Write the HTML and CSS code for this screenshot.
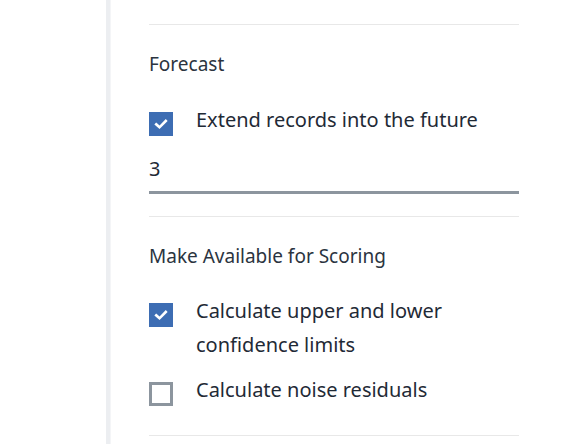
FILE: index.html
```html
<!DOCTYPE html>
<html>
<head>
<meta charset="utf-8">
<link rel="stylesheet" href="styles.css">
</head>
<body>
<div class="layout">
  <div class="side"></div>
  <div class="panel">
    <div class="content">
      <hr class="divider first">
      <section class="group group-forecast">
        <div class="group-title">Forecast</div>
        <label class="check">
          <span class="box checked"><svg viewBox="0 0 24 24" width="24" height="24"><path d="M7.2 12.3 L10.5 15.3 L16.8 8.9" fill="none" stroke="#fff" stroke-width="2.6" stroke-linecap="square"/></svg></span>
          <span class="check-label">Extend records into the future</span>
        </label>
        <div class="field">3</div>
      </section>
      <hr class="divider">
      <section class="group group-scoring">
        <div class="group-title">Make Available for Scoring</div>
        <div class="checks">
          <label class="check">
            <span class="box checked"><svg viewBox="0 0 24 24" width="24" height="24"><path d="M7.2 12.3 L10.5 15.3 L16.8 8.9" fill="none" stroke="#fff" stroke-width="2.6" stroke-linecap="square"/></svg></span>
            <span class="check-label">Calculate upper and lower confidence limits</span>
          </label>
          <label class="check">
            <span class="box"></span>
            <span class="check-label">Calculate noise residuals</span>
          </label>
        </div>
      </section>
      <hr class="divider">
    </div>
  </div>
</div>
</body>
</html>
```

FILE: styles.css
```css
html, body {
  margin: 0;
  padding: 0;
  background: #fff;
}
body {
  font-family: "Noto Sans", "Open Sans", sans-serif;
  color: #1f2a36;
  width: 561px;
  height: 444px;
  overflow: hidden;
}
.layout {
  display: flex;
  height: 444px;
}
.side {
  width: 106px;
  flex: none;
  background: #fff;
}
.panel {
  flex: 1;
  border-left: 4px solid #eceef1;
  box-shadow: inset 1px 0 0 #f4f5f7;
  padding-left: 39px;
}
.content {
  width: 370px;
}
.divider {
  border: 0;
  border-top: 1px solid #e8e8e8;
  margin: 0;
}
.divider.first {
  margin-top: 24px;
}
.group {
  padding-top: 25px;
}
.group-forecast {
  padding-bottom: 22px;
}
.group-forecast .group-title {
  margin-bottom: 25px;
}
.group-scoring {
  padding-bottom: 28px;
}
.group-scoring .group-title {
  margin-bottom: 24px;
}
.group-title {
  font-size: 19px;
  line-height: 28px;
  color: #2b3440;
}
.checks {
  display: flex;
  flex-direction: column;
  gap: 11px;
}
.check {
  display: flex;
  align-items: flex-start;
  gap: 23px;
}
.box {
  width: 24px;
  height: 24px;
  flex: none;
  box-sizing: border-box;
  border: 3px solid #8c959e;
  background: #fff;
  margin-top: 9px;
}
.box.checked {
  border: 0;
  background: #3d6db3;
}
.box svg {
  display: block;
}
.check-label {
  font-size: 20px;
  line-height: 34px;
  color: #1f2a36;
}
.field {
  margin-top: 18px;
  font-size: 20px;
  line-height: 28px;
  padding-bottom: 8px;
  border-bottom: 3px solid #8c959e;
}
```
